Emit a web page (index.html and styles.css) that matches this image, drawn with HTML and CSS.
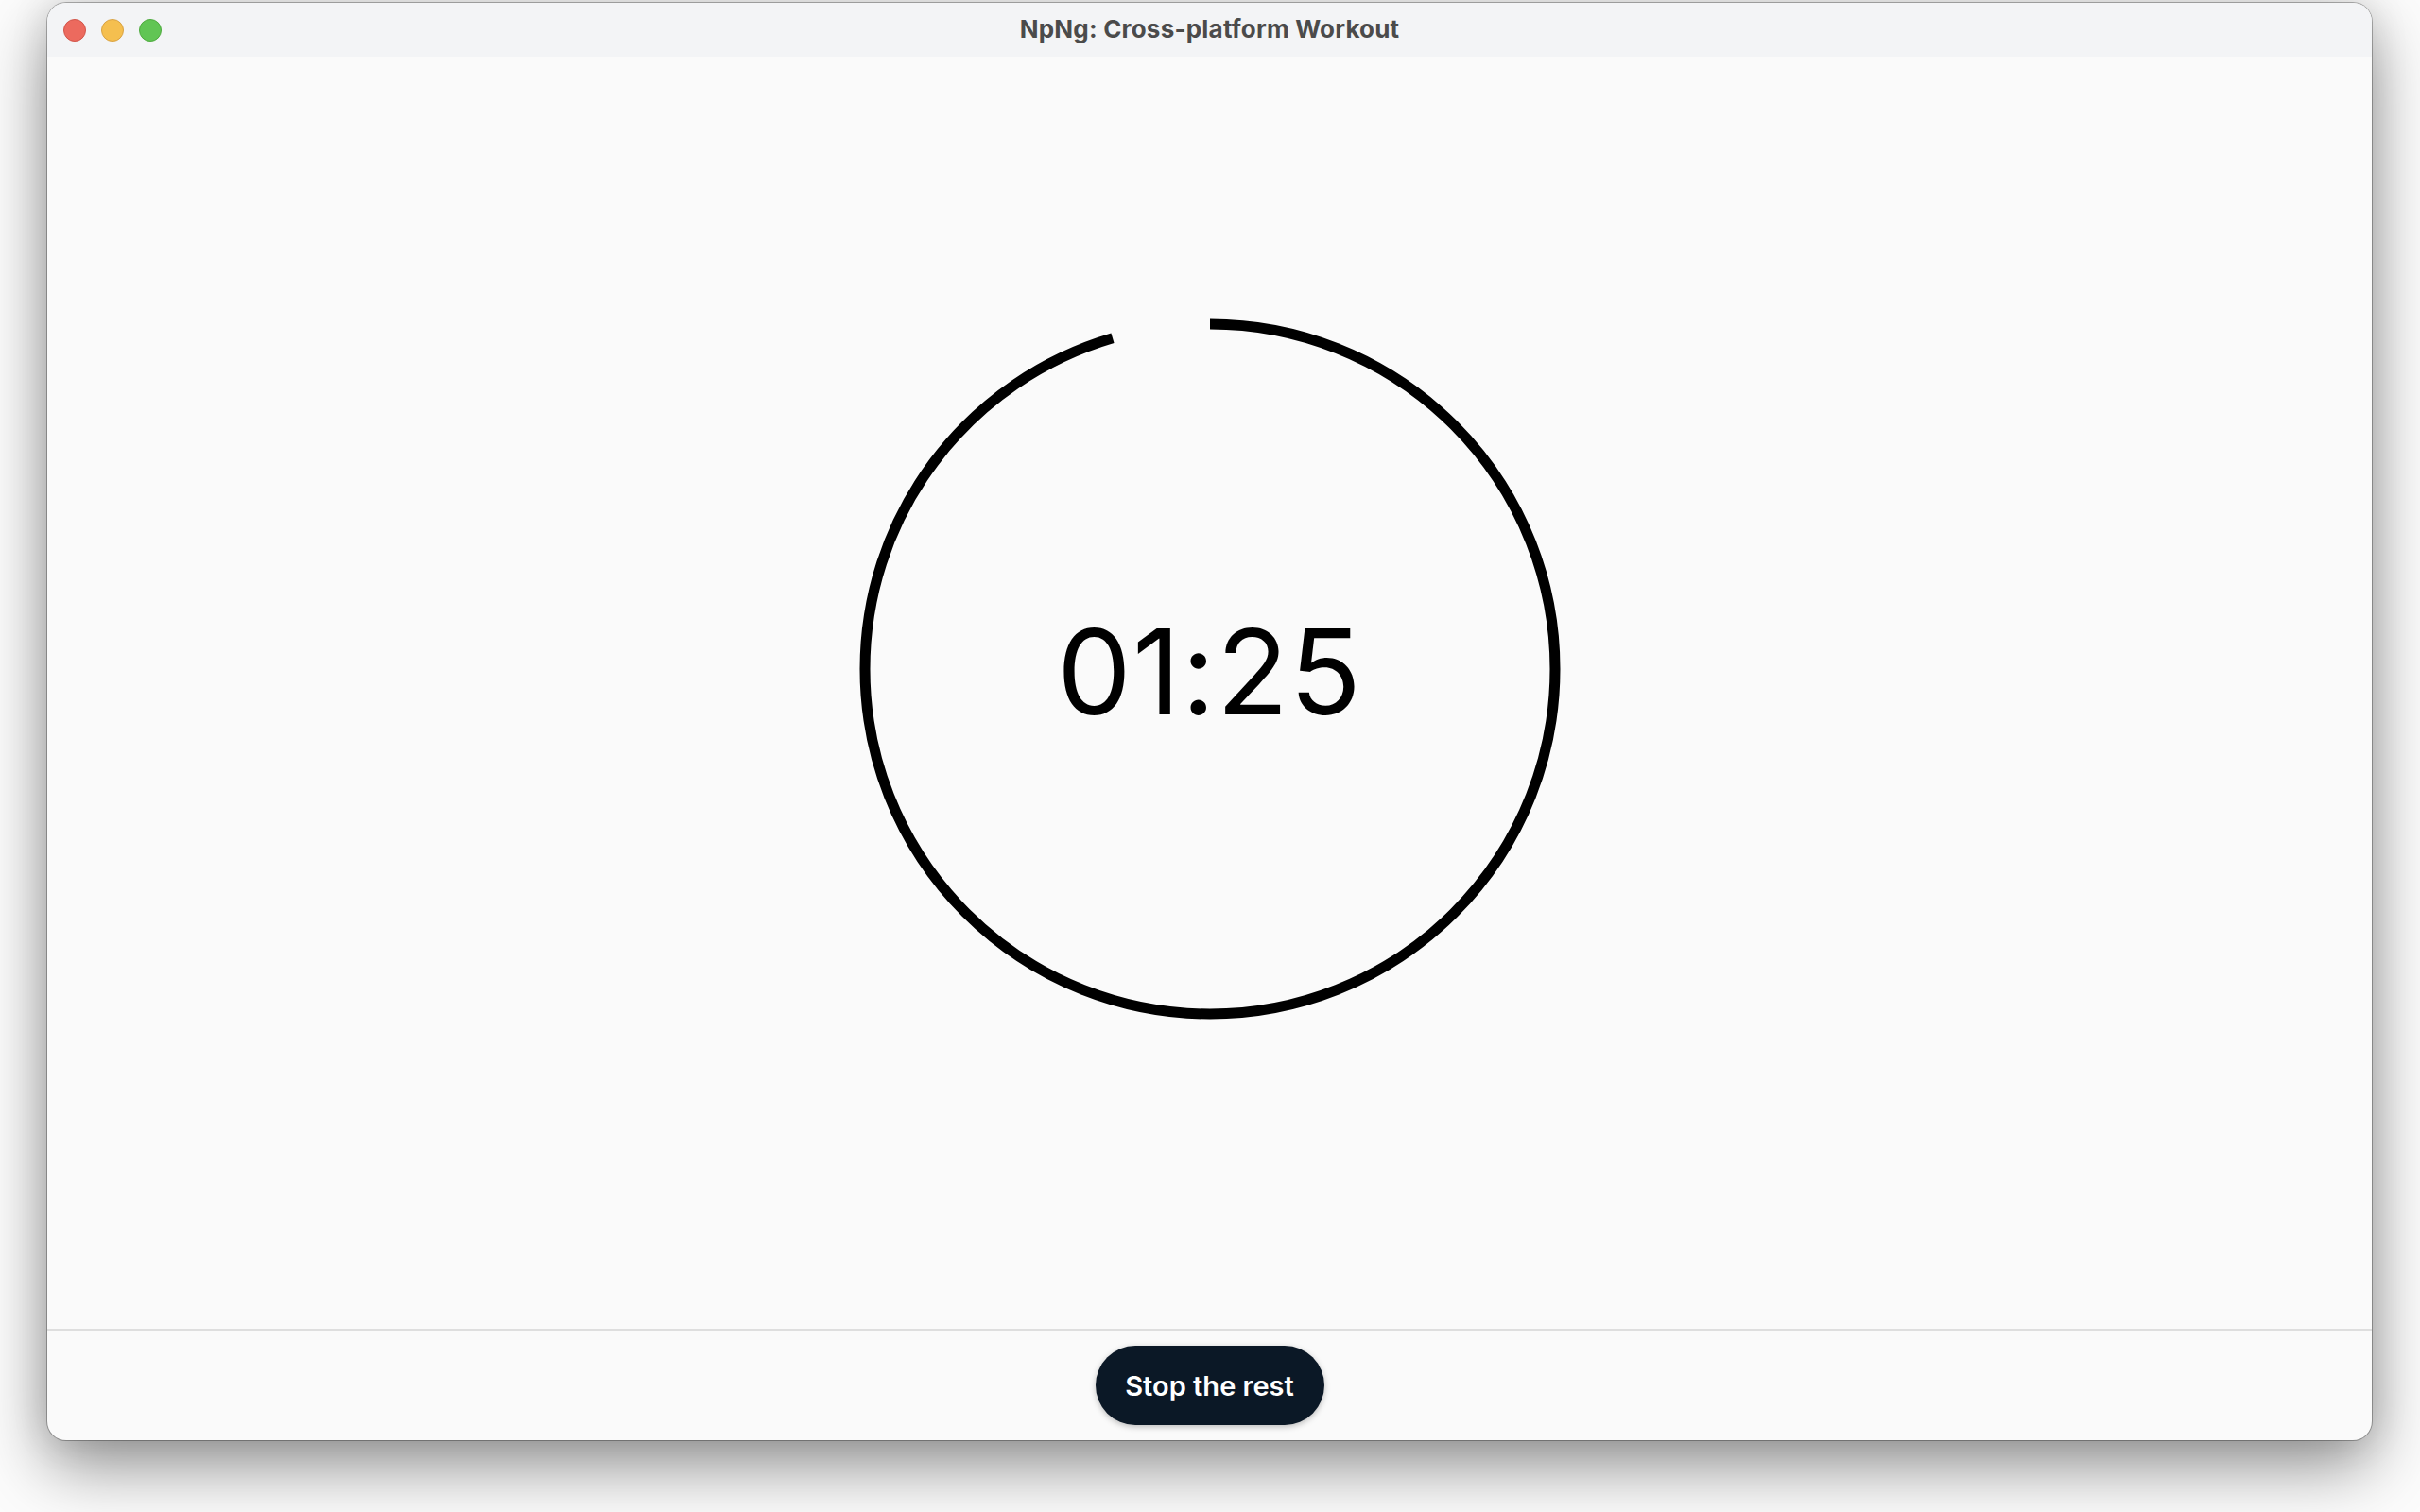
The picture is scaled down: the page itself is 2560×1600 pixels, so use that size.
FILE: index.html
```html
<!DOCTYPE html>
<html lang="en">
<head>
<meta charset="utf-8">
<title>NpNg: Cross-platform Workout</title>
<link rel="stylesheet" href="styles.css">
</head>
<body>
  <div class="window">
    <header class="titlebar">
      <div class="lights">
        <span class="light red"></span>
        <span class="light yellow"></span>
        <span class="light green"></span>
      </div>
      <div class="title">NpNg: Cross-platform Workout</div>
    </header>
    <main class="content">
      <div class="timer">
        <svg class="ring" width="742" height="742" viewBox="0 0 742 742">
          <circle cx="371" cy="371" r="365" fill="none" stroke="#000" stroke-width="11"
                  stroke-dasharray="2188 2400" transform="rotate(-90 371 371)"/>
        </svg>
        <div class="time">01:25</div>
      </div>
    </main>
    <footer class="footer">
      <button class="stop">Stop the rest</button>
    </footer>
  </div>
</body>
</html>
```
FILE: styles.css
```css
html, body {
  margin: 0;
  padding: 0;
}
body {
  width: 2560px;
  height: 1600px;
  background: #fcfcfc;
  padding: 3px 0 0 50px;
  box-sizing: border-box;
  overflow: hidden;
  font-family: Inter, "Liberation Sans", sans-serif;
}
.window {
  width: 2459px;
  height: 1521px;
  border-radius: 20px;
  overflow: hidden;
  background: #fafafa;
  display: flex;
  flex-direction: column;
  box-shadow: 0 0 0 1px rgba(0,0,0,0.28), 0 28px 70px rgba(0,0,0,0.42), 0 0 40px rgba(0,0,0,0.12);
}
.titlebar {
  height: 57px;
  flex: none;
  background: #f3f4f6;
  display: grid;
  grid-template-columns: 1fr;
  align-items: center;
}
.lights, .title {
  grid-row: 1;
  grid-column: 1;
}
.lights {
  display: flex;
  gap: 16px;
  padding-left: 17px;
  align-items: center;
}
.light {
  width: 22px;
  height: 22px;
  border-radius: 50%;
  border: 1px solid;
}
.red { background: #ec6a5e; border-color: #d1554a; }
.yellow { background: #f5bf4f; border-color: #d8a244; }
.green { background: #61c554; border-color: #4faa3f; }
.title {
  text-align: center;
  font-size: 26px;
  font-weight: 700;
  color: #4b4b4b;
  letter-spacing: 0.2px;
  padding-bottom: 2px;
}
.content {
  flex: 1;
  display: flex;
  justify-content: center;
  padding-top: 277px;
}
.timer {
  display: grid;
  width: 742px;
  height: 742px;
  place-items: center;
}
.ring, .time {
  grid-row: 1;
  grid-column: 1;
}
.time {
  font-size: 125px;
  font-weight: 400;
  color: #000;
  letter-spacing: 1px;
  padding-top: 4px;
}
.footer {
  flex: none;
  height: 116px;
  border-top: 2px solid #dedede;
  display: flex;
  justify-content: center;
  align-items: center;
}
.stop {
  width: 242px;
  height: 84px;
  border: none;
  border-radius: 42px;
  background: #0b1826;
  color: #fff;
  font-family: Inter, "Liberation Sans", sans-serif;
  font-size: 29px;
  font-weight: 600;
  box-shadow: 0 2px 6px rgba(0,0,0,0.25);
  padding: 0;
}
```
